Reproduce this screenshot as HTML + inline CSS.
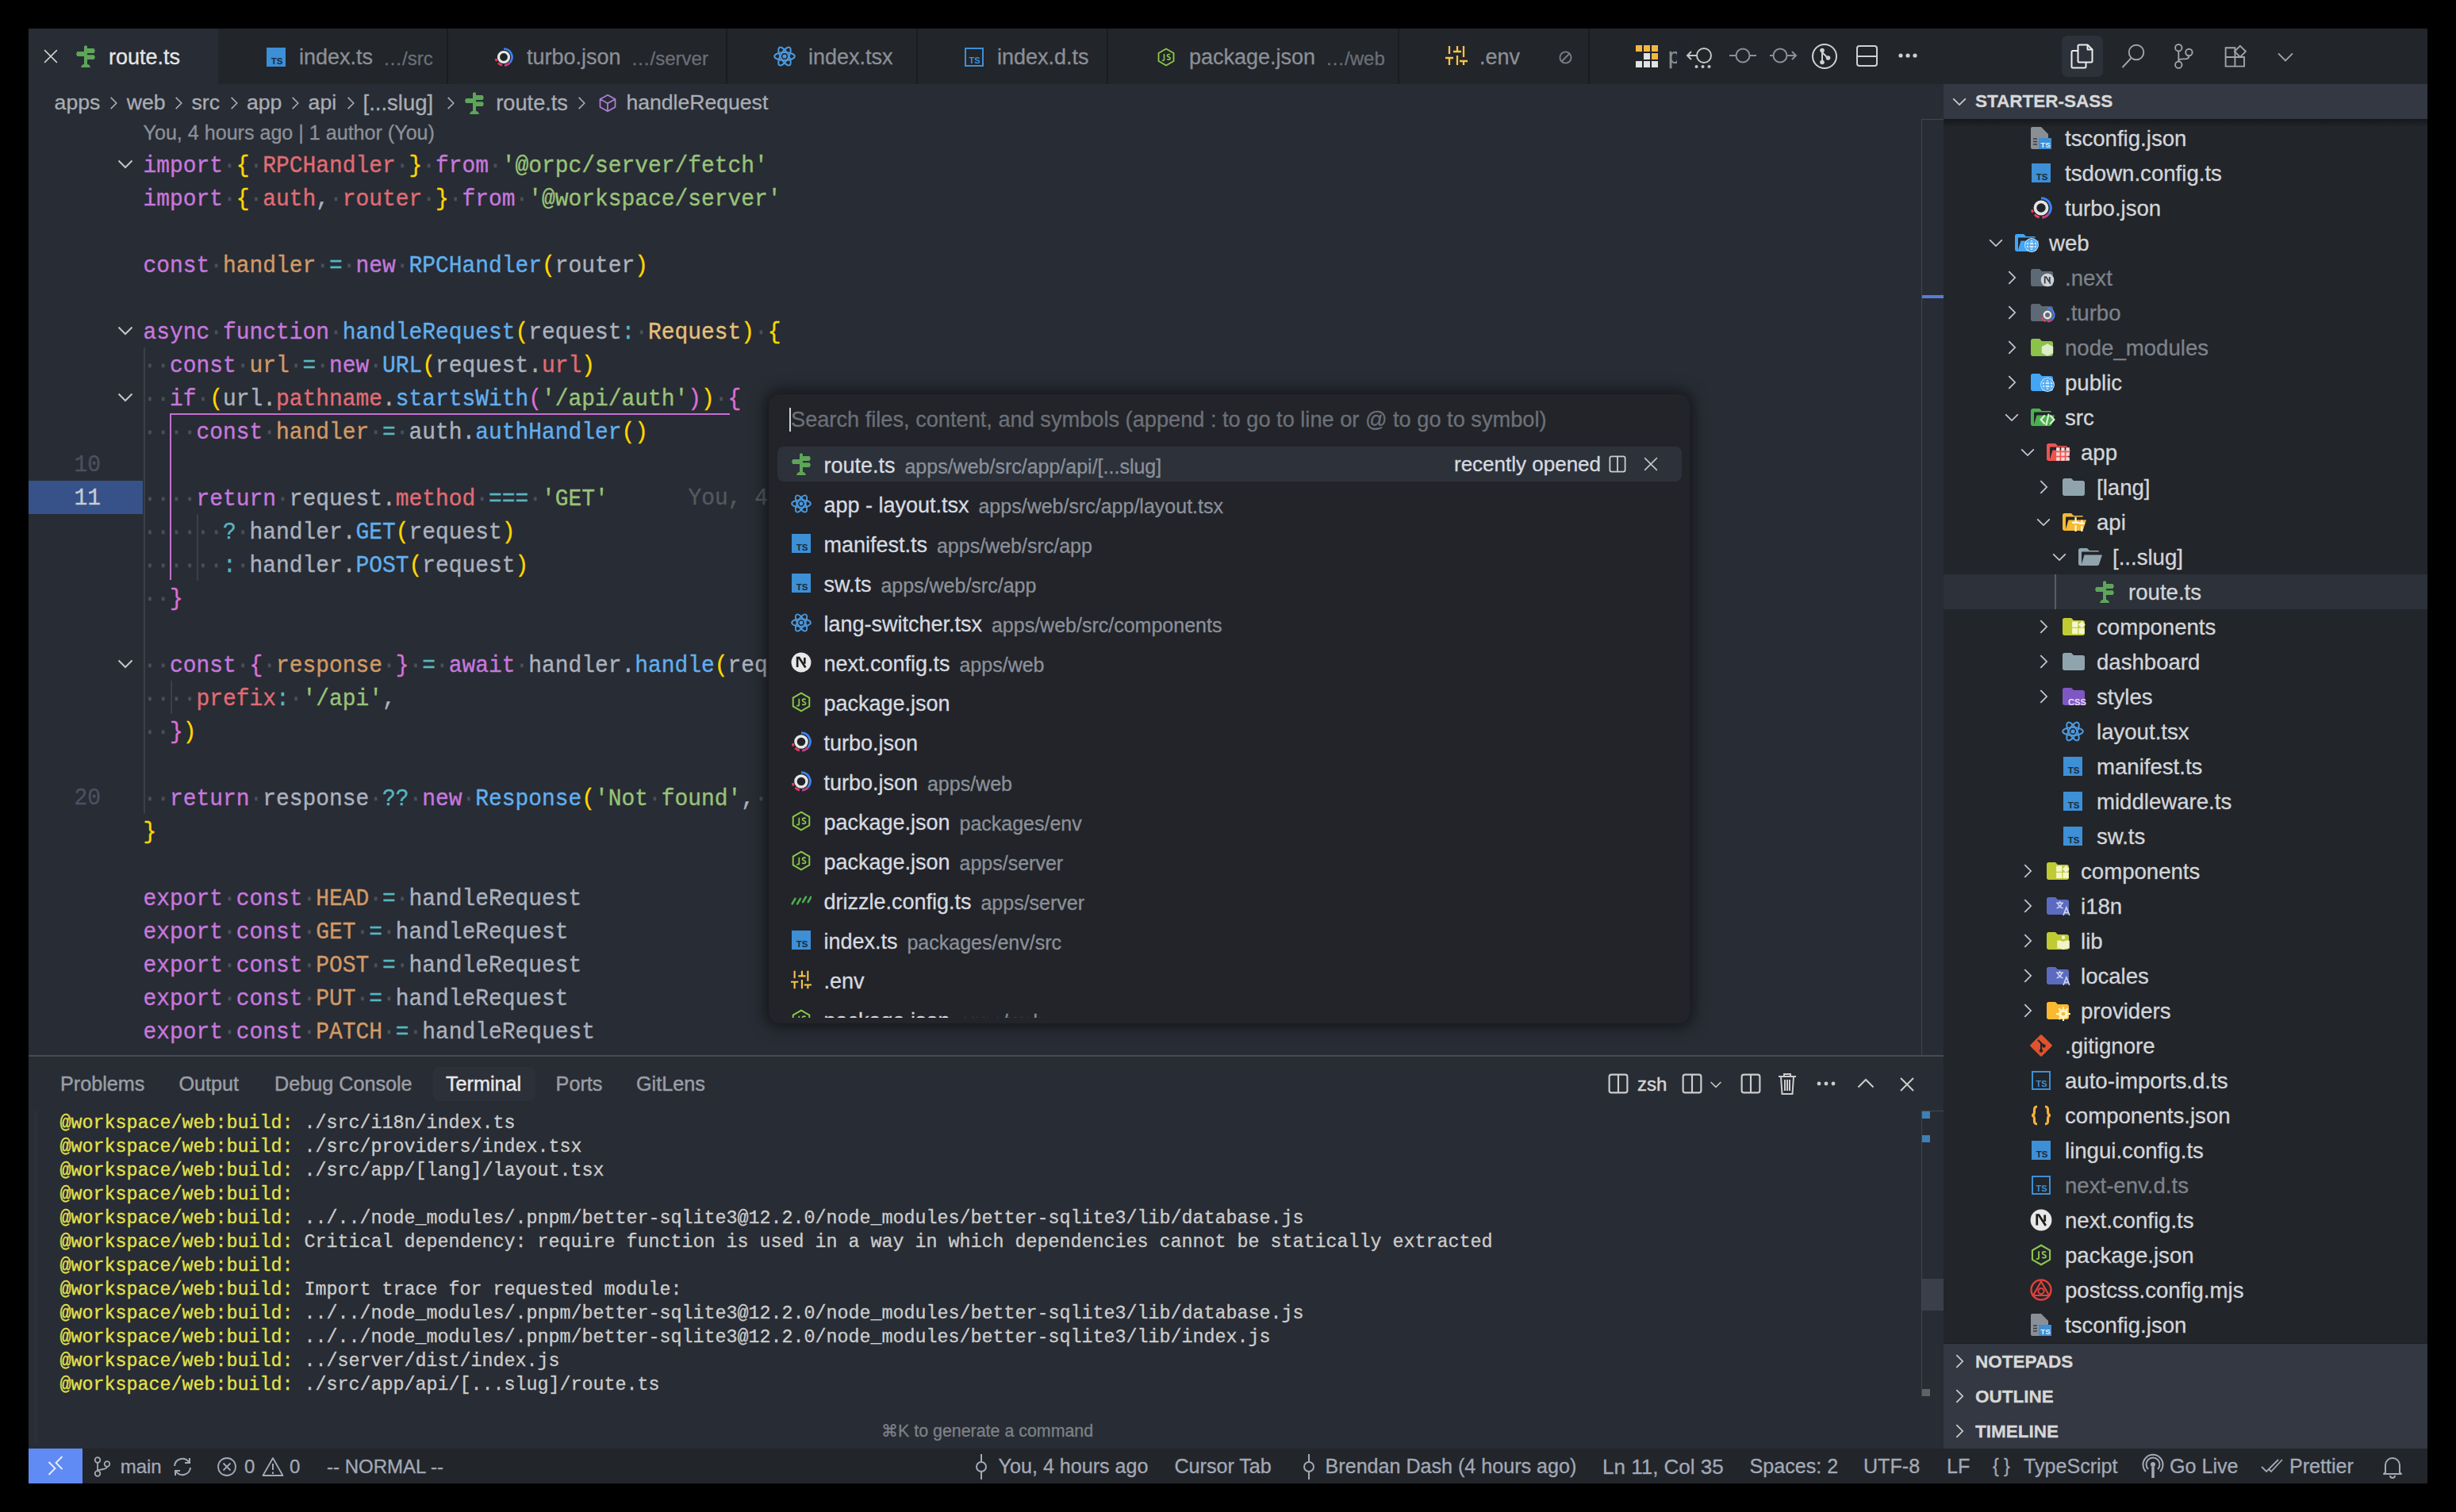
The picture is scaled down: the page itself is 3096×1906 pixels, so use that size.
<!DOCTYPE html><html><head><meta charset="utf-8"><style>
*{margin:0;padding:0;box-sizing:border-box}
html,body{width:3096px;height:1906px;overflow:hidden;background:#000}
body{position:relative;font-family:"Liberation Sans", sans-serif;color:#abb2bf}
.a{position:absolute}
.t{position:absolute;white-space:pre;line-height:1;-webkit-text-stroke:0.3px}
.mono{font-family:"Liberation Mono", monospace}
.code{-webkit-text-stroke:0.35px;transform:scaleY(1.08);transform-origin:0 30px}
.w{color:#4a505c}
.sb{-webkit-text-stroke:0.45px}
svg{position:absolute;overflow:visible}
</style></head><body><div class="a" style="left:36px;top:36px;width:3024px;height:1834px;background:#282c34;"></div><div class="a" style="left:36px;top:36px;width:2414px;height:70px;background:#22252a;"></div><div class="a" style="left:36px;top:36px;width:239px;height:70px;background:#282c34;"></div><div class="a" style="left:2450px;top:36px;width:610px;height:70px;background:#22252a;"></div><div class="a" style="left:2450px;top:106px;width:610px;height:1720px;background:#22252a;"></div><div class="a" style="left:36px;top:1826px;width:3024px;height:44px;background:#22252a;"></div><div class="a" style="left:36px;top:606px;width:144px;height:42px;background:#365289;"></div><div class="t mono code" style="left:93.49000000000001px;top:570.05px;font-size:27.92px;line-height:34.9px;color:#495162;">10</div><div class="t mono code" style="left:93.49000000000001px;top:612.05px;font-size:27.92px;line-height:34.9px;color:#c8ccd4;">11</div><div class="t mono code" style="left:93.49000000000001px;top:990.05px;font-size:27.92px;line-height:34.9px;color:#495162;">20</div><div class="a" style="left:181px;top:438px;width:2px;height:588px;background:#3b4048"></div><div class="a" style="left:248px;top:648px;width:2px;height:84px;background:#3b4048"></div><div class="a" style="left:215px;top:858px;width:2px;height:42px;background:#3b4048"></div><div class="a" style="left:214px;top:521px;width:706px;height:2px;background:#c56fd0"></div><div class="a" style="left:214px;top:521px;width:2px;height:210px;background:#c56fd0"></div><div class="t mono code" style="left:180.5px;top:188.5px;font-size:27.92px;line-height:42px"><span style="color:#c678dd">import</span><span class="w">·</span><span style="color:#ffd700">{</span><span class="w">·</span><span style="color:#e06c75">RPCHandler</span><span class="w">·</span><span style="color:#ffd700">}</span><span class="w">·</span><span style="color:#c678dd">from</span><span class="w">·</span><span style="color:#98c379">&#x27;@orpc/server/fetch&#x27;</span></div><div class="t mono code" style="left:180.5px;top:230.5px;font-size:27.92px;line-height:42px"><span style="color:#c678dd">import</span><span class="w">·</span><span style="color:#ffd700">{</span><span class="w">·</span><span style="color:#e06c75">auth</span><span style="color:#abb2bf">,</span><span class="w">·</span><span style="color:#e06c75">router</span><span class="w">·</span><span style="color:#ffd700">}</span><span class="w">·</span><span style="color:#c678dd">from</span><span class="w">·</span><span style="color:#98c379">&#x27;@workspace/server&#x27;</span></div><div class="t mono code" style="left:180.5px;top:314.5px;font-size:27.92px;line-height:42px"><span style="color:#c678dd">const</span><span class="w">·</span><span style="color:#d19a66">handler</span><span class="w">·</span><span style="color:#56b6c2">=</span><span class="w">·</span><span style="color:#c678dd">new</span><span class="w">·</span><span style="color:#61afef">RPCHandler</span><span style="color:#ffd700">(</span><span style="color:#abb2bf">router</span><span style="color:#ffd700">)</span></div><div class="t mono code" style="left:180.5px;top:398.5px;font-size:27.92px;line-height:42px"><span style="color:#c678dd">async</span><span class="w">·</span><span style="color:#c678dd">function</span><span class="w">·</span><span style="color:#61afef">handleRequest</span><span style="color:#ffd700">(</span><span style="color:#abb2bf">request</span><span style="color:#56b6c2">:</span><span class="w">·</span><span style="color:#e5c07b">Request</span><span style="color:#ffd700">)</span><span class="w">·</span><span style="color:#ffd700">{</span></div><div class="t mono code" style="left:180.5px;top:440.5px;font-size:27.92px;line-height:42px"><span class="w">··</span><span style="color:#c678dd">const</span><span class="w">·</span><span style="color:#d19a66">url</span><span class="w">·</span><span style="color:#56b6c2">=</span><span class="w">·</span><span style="color:#c678dd">new</span><span class="w">·</span><span style="color:#61afef">URL</span><span style="color:#ffd700">(</span><span style="color:#abb2bf">request</span><span style="color:#abb2bf">.</span><span style="color:#e06c75">url</span><span style="color:#ffd700">)</span></div><div class="t mono code" style="left:180.5px;top:482.5px;font-size:27.92px;line-height:42px"><span class="w">··</span><span style="color:#c678dd">if</span><span class="w">·</span><span style="color:#ffd700">(</span><span style="color:#abb2bf">url</span><span style="color:#abb2bf">.</span><span style="color:#e06c75">pathname</span><span style="color:#abb2bf">.</span><span style="color:#61afef">startsWith</span><span style="color:#da70d6">(</span><span style="color:#98c379">&#x27;/api/auth&#x27;</span><span style="color:#da70d6">)</span><span style="color:#ffd700">)</span><span class="w">·</span><span style="color:#da70d6">{</span></div><div class="t mono code" style="left:180.5px;top:524.5px;font-size:27.92px;line-height:42px"><span class="w">····</span><span style="color:#c678dd">const</span><span class="w">·</span><span style="color:#d19a66">handler</span><span class="w">·</span><span style="color:#56b6c2">=</span><span class="w">·</span><span style="color:#abb2bf">auth</span><span style="color:#abb2bf">.</span><span style="color:#61afef">authHandler</span><span style="color:#ffd700">(</span><span style="color:#ffd700">)</span></div><div class="t mono code" style="left:180.5px;top:608.5px;font-size:27.92px;line-height:42px"><span class="w">····</span><span style="color:#c678dd">return</span><span class="w">·</span><span style="color:#abb2bf">request</span><span style="color:#abb2bf">.</span><span style="color:#e06c75">method</span><span class="w">·</span><span style="color:#56b6c2">===</span><span class="w">·</span><span style="color:#98c379">&#x27;GET&#x27;</span></div><div class="t mono code" style="left:180.5px;top:650.5px;font-size:27.92px;line-height:42px"><span class="w">······</span><span style="color:#56b6c2">?</span><span class="w">·</span><span style="color:#abb2bf">handler</span><span style="color:#abb2bf">.</span><span style="color:#61afef">GET</span><span style="color:#ffd700">(</span><span style="color:#abb2bf">request</span><span style="color:#ffd700">)</span></div><div class="t mono code" style="left:180.5px;top:692.5px;font-size:27.92px;line-height:42px"><span class="w">······</span><span style="color:#56b6c2">:</span><span class="w">·</span><span style="color:#abb2bf">handler</span><span style="color:#abb2bf">.</span><span style="color:#61afef">POST</span><span style="color:#ffd700">(</span><span style="color:#abb2bf">request</span><span style="color:#ffd700">)</span></div><div class="t mono code" style="left:180.5px;top:734.5px;font-size:27.92px;line-height:42px"><span class="w">··</span><span style="color:#da70d6">}</span></div><div class="t mono code" style="left:180.5px;top:818.5px;font-size:27.92px;line-height:42px"><span class="w">··</span><span style="color:#c678dd">const</span><span class="w">·</span><span style="color:#da70d6">{</span><span class="w">·</span><span style="color:#d19a66">response</span><span class="w">·</span><span style="color:#da70d6">}</span><span class="w">·</span><span style="color:#56b6c2">=</span><span class="w">·</span><span style="color:#c678dd">await</span><span class="w">·</span><span style="color:#abb2bf">handler</span><span style="color:#abb2bf">.</span><span style="color:#61afef">handle</span><span style="color:#ffd700">(</span><span style="color:#abb2bf">request</span><span style="color:#abb2bf">,</span><span class="w">·</span><span style="color:#da70d6">{</span></div><div class="t mono code" style="left:180.5px;top:860.5px;font-size:27.92px;line-height:42px"><span class="w">····</span><span style="color:#e06c75">prefix</span><span style="color:#56b6c2">:</span><span class="w">·</span><span style="color:#98c379">&#x27;/api&#x27;</span><span style="color:#abb2bf">,</span></div><div class="t mono code" style="left:180.5px;top:902.5px;font-size:27.92px;line-height:42px"><span class="w">··</span><span style="color:#da70d6">}</span><span style="color:#ffd700">)</span></div><div class="t mono code" style="left:180.5px;top:986.5px;font-size:27.92px;line-height:42px"><span class="w">··</span><span style="color:#c678dd">return</span><span class="w">·</span><span style="color:#abb2bf">response</span><span class="w">·</span><span style="color:#56b6c2">??</span><span class="w">·</span><span style="color:#c678dd">new</span><span class="w">·</span><span style="color:#61afef">Response</span><span style="color:#ffd700">(</span><span style="color:#98c379">&#x27;Not<span class="w">·</span>found&#x27;</span><span style="color:#abb2bf">,</span><span class="w">·</span><span style="color:#da70d6">{</span><span class="w">·</span><span style="color:#e06c75">status</span><span style="color:#56b6c2">:</span><span class="w">·</span><span style="color:#d19a66">404</span><span class="w">·</span><span style="color:#da70d6">}</span><span style="color:#ffd700">)</span></div><div class="t mono code" style="left:180.5px;top:1028.5px;font-size:27.92px;line-height:42px"><span style="color:#ffd700">}</span></div><div class="t mono code" style="left:180.5px;top:1112.5px;font-size:27.92px;line-height:42px"><span style="color:#c678dd">export</span><span class="w">·</span><span style="color:#c678dd">const</span><span class="w">·</span><span style="color:#d19a66">HEAD</span><span class="w">·</span><span style="color:#56b6c2">=</span><span class="w">·</span><span style="color:#abb2bf">handleRequest</span></div><div class="t mono code" style="left:180.5px;top:1154.5px;font-size:27.92px;line-height:42px"><span style="color:#c678dd">export</span><span class="w">·</span><span style="color:#c678dd">const</span><span class="w">·</span><span style="color:#d19a66">GET</span><span class="w">·</span><span style="color:#56b6c2">=</span><span class="w">·</span><span style="color:#abb2bf">handleRequest</span></div><div class="t mono code" style="left:180.5px;top:1196.5px;font-size:27.92px;line-height:42px"><span style="color:#c678dd">export</span><span class="w">·</span><span style="color:#c678dd">const</span><span class="w">·</span><span style="color:#d19a66">POST</span><span class="w">·</span><span style="color:#56b6c2">=</span><span class="w">·</span><span style="color:#abb2bf">handleRequest</span></div><div class="t mono code" style="left:180.5px;top:1238.5px;font-size:27.92px;line-height:42px"><span style="color:#c678dd">export</span><span class="w">·</span><span style="color:#c678dd">const</span><span class="w">·</span><span style="color:#d19a66">PUT</span><span class="w">·</span><span style="color:#56b6c2">=</span><span class="w">·</span><span style="color:#abb2bf">handleRequest</span></div><div class="t mono code" style="left:180.5px;top:1280.5px;font-size:27.92px;line-height:42px"><span style="color:#c678dd">export</span><span class="w">·</span><span style="color:#c678dd">const</span><span class="w">·</span><span style="color:#d19a66">PATCH</span><span class="w">·</span><span style="color:#56b6c2">=</span><span class="w">·</span><span style="color:#abb2bf">handleRequest</span></div><div class="t mono code" style="left:867.4549999999999px;top:612.05px;font-size:27.92px;line-height:34.9px;color:#545862;">You, 4 hours ago • Initial commit</div><svg style="left:148px;top:201.0px" width="20" height="12" viewBox="0 0 20 12"><path d="M1.5 1.5 L10 10 L18.5 1.5" fill="none" stroke="#c5c5c5" stroke-width="2"/></svg><svg style="left:148px;top:411.0px" width="20" height="12" viewBox="0 0 20 12"><path d="M1.5 1.5 L10 10 L18.5 1.5" fill="none" stroke="#c5c5c5" stroke-width="2"/></svg><svg style="left:148px;top:495.0px" width="20" height="12" viewBox="0 0 20 12"><path d="M1.5 1.5 L10 10 L18.5 1.5" fill="none" stroke="#c5c5c5" stroke-width="2"/></svg><svg style="left:148px;top:831.0px" width="20" height="12" viewBox="0 0 20 12"><path d="M1.5 1.5 L10 10 L18.5 1.5" fill="none" stroke="#c5c5c5" stroke-width="2"/></svg>
<svg width="0" height="0" style="position:absolute">
<defs>
<symbol id="i-route" viewBox="0 0 24 28">
 <path fill="#5ea55a" d="M10 1.5 12 0 14 1.5V4.1H22.5L23.9 7 22.5 10H14V12.2H22.5L23.9 15.1 22.5 18.1H14V24.1H10V14.1H1.3L0 11.1 1.3 8.1H10Z"/>
 <path fill="#5ea55a" d="M6 28C6.8 25.5 8 24.1 10 24.1H14C16 24.1 17.2 25.5 18 28Z"/>
</symbol>
<symbol id="i-ts" viewBox="0 0 24 24">
 <rect x="0" y="0" width="24" height="24" fill="#3d8fd6"/>
 <text x="20.5" y="21" font-family="Liberation Sans" font-weight="bold" font-size="11.5" fill="#1b2a3a" text-anchor="end">TS</text>
</symbol>
<symbol id="i-tsd" viewBox="0 0 24 24">
 <rect x="1" y="1" width="22" height="22" fill="none" stroke="#3d8fd6" stroke-width="2"/>
 <text x="19.5" y="20" font-family="Liberation Sans" font-weight="bold" font-size="11" fill="#3d8fd6" text-anchor="end">TS</text>
</symbol>
<symbol id="i-turbo" viewBox="0 0 24 24">
 <circle cx="12" cy="12" r="6.5" fill="none" stroke="#e6e6e6" stroke-width="3.2"/>
 <path d="M12 1.5 A10.5 10.5 0 0 1 20 18.8" fill="none" stroke="#3b82f6" stroke-width="2.6"/>
 <path d="M20 18.8 A10.5 10.5 0 0 1 13 22.4" fill="none" stroke="#c0418b" stroke-width="2.6"/>
 <path d="M10 22.3 A10.5 10.5 0 0 1 5 19.3" fill="none" stroke="#ef3b5d" stroke-width="2.6"/>
 <path d="M3.2 17 A10.5 10.5 0 0 1 2 14" fill="none" stroke="#ef3b5d" stroke-width="2.6"/>
</symbol>
<symbol id="i-react" viewBox="0 0 28 26">
 <g fill="none" stroke="#4b9ae0" stroke-width="2">
 <ellipse cx="14" cy="13" rx="12.8" ry="5"/>
 <ellipse cx="14" cy="13" rx="12.8" ry="5" transform="rotate(60 14 13)"/>
 <ellipse cx="14" cy="13" rx="12.8" ry="5" transform="rotate(120 14 13)"/>
 </g><circle cx="14" cy="13" r="3.6" fill="#22252b"/><circle cx="14" cy="13" r="2.6" fill="#4b9ae0"/>
</symbol>
<symbol id="i-node" viewBox="0 0 24 24">
 <path d="M12 1.5 21.5 7v10L12 22.5 2.5 17V7z" fill="none" stroke="#8cc84b" stroke-width="1.8"/>
 <path d="M9.5 8v7.2c0 1.3-1.8 1.5-2.6.6M17 9.2c-.6-1-3.6-1.3-3.6.9 0 2 3.8 1.3 3.8 3.4 0 2.1-3.3 2-4 .8" fill="none" stroke="#8cc84b" stroke-width="1.6"/>
</symbol>
<symbol id="i-env" viewBox="0 0 28 24">
 <g stroke="#f7c34a" stroke-width="2.3" fill="none">
 <path d="M5 0v10M0 15h10M5 15v9M15 0v7M10 7h10M15 12v12M23 0v14M18 19h10M23 19v5"/>
 </g>
</symbol>
<symbol id="i-next" viewBox="0 0 24 24">
 <circle cx="12" cy="12" r="11.5" fill="#e8e8e8"/>
 <path d="M7.5 17.5V6.5h2l7.5 11.5M16 6.5v7" fill="none" stroke="#1e1e1e" stroke-width="2.4"/>
</symbol>
<symbol id="i-drizzle" viewBox="0 0 24 24">
 <g stroke="#4caf50" stroke-width="2.4" stroke-linecap="round"><path d="M1.5 16 5 10M7.5 16 11 10M14 14 17.5 8M20 14 23.5 8"/></g>
</symbol>
<symbol id="i-cube" viewBox="0 0 24 24">
 <path d="M12 1.8 21.5 7v10L12 22.2 2.5 17V7z M2.5 7 12 12.2 21.5 7 M12 12.2v10" fill="none" stroke="#b180d7" stroke-width="1.7" stroke-linejoin="round"/>
</symbol>
<symbol id="i-chev-r" viewBox="0 0 24 24"><path d="M8 3.5 16.5 12 8 20.5" fill="none" stroke="currentColor" stroke-width="1.9"/></symbol>
<symbol id="i-chev-d" viewBox="0 0 24 24"><path d="M3.5 8 12 16.5 20.5 8" fill="none" stroke="currentColor" stroke-width="1.9"/></symbol>
<symbol id="i-close" viewBox="0 0 24 24"><path d="M1.5 1.5 22.5 22.5M22.5 1.5 1.5 22.5" fill="none" stroke="currentColor" stroke-width="1.9"/></symbol>
<symbol id="i-split" viewBox="0 0 24 24"><rect x="1.5" y="1.5" width="21" height="21" rx="2.5" fill="none" stroke="currentColor" stroke-width="2"/><path d="M12 1.5v21" stroke="currentColor" stroke-width="2"/></symbol>
</defs></svg>
<div class="a" style="left:563px;top:36px;width:2px;height:70px;background:#1a1c20;"></div><div class="a" style="left:915px;top:36px;width:2px;height:70px;background:#1a1c20;"></div><div class="a" style="left:1155px;top:36px;width:2px;height:70px;background:#1a1c20;"></div><div class="a" style="left:1395px;top:36px;width:2px;height:70px;background:#1a1c20;"></div><div class="a" style="left:1762px;top:36px;width:2px;height:70px;background:#1a1c20;"></div><div class="a" style="left:2002px;top:36px;width:2px;height:70px;background:#1a1c20;"></div><svg style="left:55px;top:62px;color:#d4d4d4" width="18" height="18"><use href="#i-close"/></svg><svg style="left:96px;top:57px" width="24" height="28"><use href="#i-route"/></svg><div class="t" style="left:137px;top:55.62px;font-size:27px;line-height:33.75px;color:#e6e6e6;">route.ts</div><svg style="left:336px;top:60px" width="24" height="24"><use href="#i-ts"/></svg><div class="t" style="left:377px;top:55.62px;font-size:27px;line-height:33.75px;color:#8b8f97;">index.ts</div><div class="t" style="left:483.046875px;top:58.50px;font-size:24px;line-height:30.0px;color:#6b6f77;">…/src</div><svg style="left:623px;top:60px" width="24" height="24"><use href="#i-turbo"/></svg><div class="t" style="left:664px;top:55.62px;font-size:27px;line-height:33.75px;color:#8b8f97;">turbo.json</div><div class="t" style="left:795.5625px;top:58.50px;font-size:24px;line-height:30.0px;color:#6b6f77;">…/server</div><svg style="left:975px;top:58px" width="28" height="26"><use href="#i-react"/></svg><div class="t" style="left:1019px;top:55.62px;font-size:27px;line-height:33.75px;color:#8b8f97;">index.tsx</div><svg style="left:1216px;top:60px" width="24" height="24"><use href="#i-tsd"/></svg><div class="t" style="left:1257px;top:55.62px;font-size:27px;line-height:33.75px;color:#8b8f97;">index.d.ts</div><svg style="left:1458px;top:60px" width="24" height="24"><use href="#i-node"/></svg><div class="t" style="left:1499px;top:55.62px;font-size:27px;line-height:33.75px;color:#8b8f97;">package.json</div><div class="t" style="left:1671.109375px;top:58.50px;font-size:24px;line-height:30.0px;color:#6b6f77;">…/web</div><svg style="left:1822px;top:58px" width="28" height="24"><use href="#i-env"/></svg><div class="t" style="left:1865px;top:55.62px;font-size:27px;line-height:33.75px;color:#8b8f97;">.env</div><div class="t" style="left:68.6px;top:113.38px;font-size:26.6px;line-height:33.25px;color:#a9adb4;">apps</div><div class="t" style="left:159.8px;top:113.38px;font-size:26.6px;line-height:33.25px;color:#a9adb4;">web</div><div class="t" style="left:241.5px;top:113.38px;font-size:26.6px;line-height:33.25px;color:#a9adb4;">src</div><div class="t" style="left:311px;top:113.38px;font-size:26.6px;line-height:33.25px;color:#a9adb4;">app</div><div class="t" style="left:388.6px;top:113.38px;font-size:26.6px;line-height:33.25px;color:#a9adb4;">api</div><div class="t" style="left:457.5px;top:112.81px;font-size:27.5px;line-height:34.38px;color:#a9adb4;">[...slug]</div><svg style="left:133.3px;top:120px;color:#a9adb4" width="20" height="20"><use href="#i-chev-r"/></svg><svg style="left:215px;top:120px;color:#a9adb4" width="20" height="20"><use href="#i-chev-r"/></svg><svg style="left:284.5px;top:120px;color:#a9adb4" width="20" height="20"><use href="#i-chev-r"/></svg><svg style="left:362.4px;top:120px;color:#a9adb4" width="20" height="20"><use href="#i-chev-r"/></svg><svg style="left:431.5px;top:120px;color:#a9adb4" width="20" height="20"><use href="#i-chev-r"/></svg><svg style="left:557.5px;top:120px;color:#a9adb4" width="20" height="20"><use href="#i-chev-r"/></svg><svg style="left:723px;top:120px;color:#a9adb4" width="20" height="20"><use href="#i-chev-r"/></svg><svg style="left:586px;top:116px" width="24" height="28"><use href="#i-route"/></svg><div class="t" style="left:625.3px;top:113.00px;font-size:27.2px;line-height:34.0px;color:#a9adb4;">route.ts</div><svg style="left:754px;top:118px" width="24" height="24"><use href="#i-cube"/></svg><div class="t" style="left:789.4px;top:113.38px;font-size:26.6px;line-height:33.25px;color:#a9adb4;">handleRequest</div><div class="t" style="left:180.5px;top:152.31px;font-size:25.1px;line-height:31.38px;color:#8d9199;">You, 4 hours ago | 1 author (You)</div><div class="a" style="left:2422px;top:150px;width:1px;height:1180px;background:#43464d;"></div><div class="a" style="left:2422px;top:150px;width:28px;height:1px;background:#43464d;"></div><div class="a" style="left:2423px;top:372px;width:27px;height:4px;background:#5a7bd6;"></div><div class="a" style="left:2450px;top:106px;width:610px;height:44px;background:#333842;"></div><svg style="left:2459px;top:117px;color:#cccccc" width="22" height="22"><use href="#i-chev-d"/></svg><div class="t" style="left:2490px;top:114.44px;font-size:22.5px;line-height:28.12px;color:#d7d7d7;font-weight:bold">STARTER-SASS</div><div class="a" style="left:2450px;top:150px;width:610px;height:10px;background:linear-gradient(#15171b,rgba(21,23,27,0))"></div>
<svg width="0" height="0" style="position:absolute"><defs>
<symbol id="f-c" viewBox="0 0 28 22"><path d="M11 0H2.5C1.1 0 0 1.1 0 2.5v17C0 20.9 1.1 22 2.5 22h23c1.4 0 2.5-1.1 2.5-2.5v-14C28 4.1 26.9 3 25.5 3H14z" fill="currentColor"/></symbol>
<symbol id="f-o" viewBox="0 0 30 22"><path d="M11 0H2.5C1.1 0 0 1.1 0 2.5v17C0 20.9 1.1 22 2.5 22h21.5c1 0 1.7-.6 2-1.4L30 8.5H7.5L4 20V5.5C4 5 4.3 4.5 5 4.5h21V4.5C26 3.7 25.3 3 24.5 3H14z" fill="currentColor"/></symbol>
<symbol id="i-tscfg" viewBox="0 0 26 28"><path d="M0 2C0 .9.9 0 2 0h11l9 9v6H10v13H2c-1.1 0-2-.9-2-2z" fill="#8a8f96"/><path d="M3 15h5M3 18.5h5M3 22h5" stroke="#3a3d42" stroke-width="1.6"/><rect x="10" y="14" width="16" height="14" fill="#3d8fd6"/><text x="24.5" y="26" font-family="Liberation Sans" font-weight="bold" font-size="9.5" fill="#f0f0f0" text-anchor="end">TS</text></symbol>
<symbol id="i-git" viewBox="0 0 28 28"><path d="M14 1.5 26.5 14 14 26.5 1.5 14z" fill="#e0532d" stroke="#e0532d" stroke-width="2.5" stroke-linejoin="round"/><path d="M10 7l7.5 7.5M14 11v9" stroke="#22252b" stroke-width="2"/><circle cx="14" cy="20.5" r="2.2" fill="#22252b"/><circle cx="17.5" cy="14.5" r="2.2" fill="#22252b"/></symbol>
<symbol id="i-braces" viewBox="0 0 28 28"><path d="M9 3C5 3 5.5 6 5.5 9s-.5 5-3.5 5c3 0 3.5 2 3.5 5s-.5 6 3.5 6M19 3c4 0 3.5 3 3.5 6s.5 5 3.5 5c-3 0-3.5 2-3.5 5s.5 6-3.5 6" fill="none" stroke="#f5b13d" stroke-width="3.2"/></symbol>
<symbol id="i-postcss" viewBox="0 0 28 28"><circle cx="14" cy="14" r="12.5" fill="none" stroke="#e0403a" stroke-width="2.4"/><path d="M14 3.5 24 21H4z" fill="none" stroke="#e0403a" stroke-width="2.2"/><circle cx="14" cy="15.5" r="3.6" fill="none" stroke="#e0403a" stroke-width="2"/></symbol>
</defs></svg>
<svg style="left:2559px;top:160.0px" width="28" height="28"><use href="#i-tscfg"/></svg><div class="t" style="left:2603px;top:157.75px;font-size:27.6px;line-height:34.5px;color:#d3d5d9;">tsconfig.json</div><svg style="left:2561px;top:206.0px" width="24" height="24"><use href="#i-ts"/></svg><div class="t" style="left:2603px;top:201.75px;font-size:27.6px;line-height:34.5px;color:#d3d5d9;">tsdown.config.ts</div><svg style="left:2559px;top:248.0px" width="28" height="28"><use href="#i-turbo"/></svg><div class="t" style="left:2603px;top:245.75px;font-size:27.6px;line-height:34.5px;color:#d3d5d9;">turbo.json</div><svg style="left:2505px;top:295.0px;color:#c5c8ce" width="22" height="22"><use href="#i-chev-d"/></svg><svg style="left:2540px;top:295.0px;color:#42a5f5" width="30" height="22"><use href="#f-o"/></svg><svg style="left:2551px;top:299.0px" width="20" height="20" viewBox="0 0 18 18"><circle cx="9" cy="9" r="8" fill="#d6e9fb" /><g fill="none" stroke="#42a5f5" stroke-width="1.3"><circle cx="9" cy="9" r="6.5"/><ellipse cx="9" cy="9" rx="3" ry="6.5"/><path d="M2.5 9h13M3.5 5.5h11M3.5 12.5h11"/></g></svg><div class="t" style="left:2583px;top:289.75px;font-size:27.6px;line-height:34.5px;color:#d3d5d9;">web</div><svg style="left:2525px;top:339.0px;color:#c5c8ce" width="22" height="22"><use href="#i-chev-r"/></svg><svg style="left:2560px;top:339.0px;color:#5d6a75" width="28" height="22"><use href="#f-c"/></svg><svg style="left:2571px;top:343.0px" width="20" height="20" viewBox="0 0 18 18"><circle cx="9" cy="9" r="7.5" fill="#cfd3d8"/><path d="M6 13V5.5h1.3L12.5 13M11.5 5.5v5" stroke="#3a3f47" stroke-width="1.6" fill="none"/></svg><div class="t" style="left:2603px;top:333.75px;font-size:27.6px;line-height:34.5px;color:#7d828a;">.next</div><svg style="left:2525px;top:383.0px;color:#c5c8ce" width="22" height="22"><use href="#i-chev-r"/></svg><svg style="left:2560px;top:383.0px;color:#5d6a75" width="28" height="22"><use href="#f-c"/></svg><svg style="left:2571px;top:387.0px" width="20" height="20" viewBox="0 0 18 18"><circle cx="9" cy="9" r="3.8" fill="none" stroke="#e6e6e6" stroke-width="2.2"/><path d="M9 1.5a7.5 7.5 0 0 1 5.8 12.3" fill="none" stroke="#4a7cf0" stroke-width="2"/><path d="M14.8 13.8A7.5 7.5 0 0 1 9 16.5" fill="none" stroke="#c0418b" stroke-width="2"/><path d="M7 16.3A7.5 7.5 0 0 1 2.5 12" fill="none" stroke="#ef3b5d" stroke-width="2"/></svg><div class="t" style="left:2603px;top:377.75px;font-size:27.6px;line-height:34.5px;color:#7d828a;">.turbo</div><svg style="left:2525px;top:427.0px;color:#c5c8ce" width="22" height="22"><use href="#i-chev-r"/></svg><svg style="left:2560px;top:427.0px;color:#8bc34a" width="28" height="22"><use href="#f-c"/></svg><svg style="left:2571px;top:431.0px" width="20" height="20" viewBox="0 0 18 18"><path d="M9 2 15.5 5.5v7L9 16l-6.5-3.5v-7z" fill="#dcedc8"/></svg><div class="t" style="left:2603px;top:421.75px;font-size:27.6px;line-height:34.5px;color:#7d828a;">node_modules</div><svg style="left:2525px;top:471.0px;color:#c5c8ce" width="22" height="22"><use href="#i-chev-r"/></svg><svg style="left:2560px;top:471.0px;color:#42a5f5" width="28" height="22"><use href="#f-c"/></svg><svg style="left:2571px;top:475.0px" width="20" height="20" viewBox="0 0 18 18"><circle cx="9" cy="9" r="8" fill="#d6e9fb" /><g fill="none" stroke="#42a5f5" stroke-width="1.3"><circle cx="9" cy="9" r="6.5"/><ellipse cx="9" cy="9" rx="3" ry="6.5"/><path d="M2.5 9h13M3.5 5.5h11M3.5 12.5h11"/></g></svg><div class="t" style="left:2603px;top:465.75px;font-size:27.6px;line-height:34.5px;color:#d3d5d9;">public</div><svg style="left:2525px;top:515.0px;color:#c5c8ce" width="22" height="22"><use href="#i-chev-d"/></svg><svg style="left:2560px;top:515.0px;color:#4caf50" width="30" height="22"><use href="#f-o"/></svg><svg style="left:2571px;top:519.0px" width="20" height="20" viewBox="0 0 18 18"><path d="M6 4 1.5 9 6 14M12 4l4.5 5-4.5 5M10.5 2.5l-3 13" fill="none" stroke="#d9f2d0" stroke-width="2"/></svg><div class="t" style="left:2603px;top:509.75px;font-size:27.6px;line-height:34.5px;color:#d3d5d9;">src</div><svg style="left:2545px;top:559.0px;color:#c5c8ce" width="22" height="22"><use href="#i-chev-d"/></svg><svg style="left:2580px;top:559.0px;color:#ef5350" width="30" height="22"><use href="#f-o"/></svg><svg style="left:2591px;top:563.0px" width="20" height="20" viewBox="0 0 18 18"><g fill="#f8d7d7"><rect x="1.0" y="1.0" width="4" height="4"/><rect x="1.0" y="6.5" width="4" height="4"/><rect x="1.0" y="12.0" width="4" height="4"/><rect x="6.5" y="1.0" width="4" height="4"/><rect x="6.5" y="6.5" width="4" height="4"/><rect x="6.5" y="12.0" width="4" height="4"/><rect x="12.0" y="1.0" width="4" height="4"/><rect x="12.0" y="6.5" width="4" height="4"/><rect x="12.0" y="12.0" width="4" height="4"/></g></svg><div class="t" style="left:2623px;top:553.75px;font-size:27.6px;line-height:34.5px;color:#d3d5d9;">app</div><svg style="left:2565px;top:603.0px;color:#c5c8ce" width="22" height="22"><use href="#i-chev-r"/></svg><svg style="left:2600px;top:603.0px;color:#90a4ae" width="28" height="22"><use href="#f-c"/></svg><div class="t" style="left:2643px;top:597.75px;font-size:27.6px;line-height:34.5px;color:#d3d5d9;">[lang]</div><svg style="left:2565px;top:647.0px;color:#c5c8ce" width="22" height="22"><use href="#i-chev-d"/></svg><svg style="left:2600px;top:647.0px;color:#f9b931" width="30" height="22"><use href="#f-o"/></svg><svg style="left:2611px;top:651.0px" width="20" height="20" viewBox="0 0 18 18"><path d="M5 1v6M1 7h8M5 10v7M12 4v4M9 8h6M12 11v6" stroke="#fff8e0" stroke-width="2" fill="none"/></svg><div class="t" style="left:2643px;top:641.75px;font-size:27.6px;line-height:34.5px;color:#d3d5d9;">api</div><svg style="left:2585px;top:691.0px;color:#c5c8ce" width="22" height="22"><use href="#i-chev-d"/></svg><svg style="left:2620px;top:691.0px;color:#90a4ae" width="30" height="22"><use href="#f-o"/></svg><div class="t" style="left:2663px;top:685.75px;font-size:27.6px;line-height:34.5px;color:#d3d5d9;">[...slug]</div><div class="a" style="left:2450px;top:724px;width:610px;height:44px;background:#2c313a;"></div><div class="a" style="left:2590px;top:724px;width:2px;height:44px;background:#585d66;"></div><svg style="left:2641px;top:732.0px" width="24" height="28.0"><use href="#i-route"/></svg><div class="t" style="left:2683px;top:729.75px;font-size:27.6px;line-height:34.5px;color:#d3d5d9;">route.ts</div><svg style="left:2565px;top:779.0px;color:#c5c8ce" width="22" height="22"><use href="#i-chev-r"/></svg><svg style="left:2600px;top:779.0px;color:#c0ca33" width="28" height="22"><use href="#f-c"/></svg><svg style="left:2611px;top:783.0px" width="20" height="20" viewBox="0 0 18 18"><g fill="#f3f6cf"><rect x="1" y="8" width="6.5" height="6.5"/><rect x="8.5" y="8" width="6.5" height="6.5"/><rect x="1" y="0.5" width="6.5" height="6.5"/><path d="M12 0 16 4 12 8 8 4z"/></g></svg><div class="t" style="left:2643px;top:773.75px;font-size:27.6px;line-height:34.5px;color:#d3d5d9;">components</div><svg style="left:2565px;top:823.0px;color:#c5c8ce" width="22" height="22"><use href="#i-chev-r"/></svg><svg style="left:2600px;top:823.0px;color:#90a4ae" width="28" height="22"><use href="#f-c"/></svg><div class="t" style="left:2643px;top:817.75px;font-size:27.6px;line-height:34.5px;color:#d3d5d9;">dashboard</div><svg style="left:2565px;top:867.0px;color:#c5c8ce" width="22" height="22"><use href="#i-chev-r"/></svg><svg style="left:2600px;top:867.0px;color:#7e57c2" width="28" height="22"><use href="#f-c"/></svg><svg style="left:2611px;top:871.0px" width="20" height="20" viewBox="0 0 18 18"><text x="17" y="16" font-family="Liberation Sans" font-weight="bold" font-size="10" fill="#e6dcf5" text-anchor="end">CSS</text></svg><div class="t" style="left:2643px;top:861.75px;font-size:27.6px;line-height:34.5px;color:#d3d5d9;">styles</div><svg style="left:2599px;top:908.0px" width="28" height="28"><use href="#i-react"/></svg><div class="t" style="left:2643px;top:905.75px;font-size:27.6px;line-height:34.5px;color:#d3d5d9;">layout.tsx</div><svg style="left:2601px;top:954.0px" width="24" height="24"><use href="#i-ts"/></svg><div class="t" style="left:2643px;top:949.75px;font-size:27.6px;line-height:34.5px;color:#d3d5d9;">manifest.ts</div><svg style="left:2601px;top:998.0px" width="24" height="24"><use href="#i-ts"/></svg><div class="t" style="left:2643px;top:993.75px;font-size:27.6px;line-height:34.5px;color:#d3d5d9;">middleware.ts</div><svg style="left:2601px;top:1042.0px" width="24" height="24"><use href="#i-ts"/></svg><div class="t" style="left:2643px;top:1037.75px;font-size:27.6px;line-height:34.5px;color:#d3d5d9;">sw.ts</div><svg style="left:2545px;top:1087.0px;color:#c5c8ce" width="22" height="22"><use href="#i-chev-r"/></svg><svg style="left:2580px;top:1087.0px;color:#c0ca33" width="28" height="22"><use href="#f-c"/></svg><svg style="left:2591px;top:1091.0px" width="20" height="20" viewBox="0 0 18 18"><g fill="#f3f6cf"><rect x="1" y="8" width="6.5" height="6.5"/><rect x="8.5" y="8" width="6.5" height="6.5"/><rect x="1" y="0.5" width="6.5" height="6.5"/><path d="M12 0 16 4 12 8 8 4z"/></g></svg><div class="t" style="left:2623px;top:1081.75px;font-size:27.6px;line-height:34.5px;color:#d3d5d9;">components</div><svg style="left:2545px;top:1131.0px;color:#c5c8ce" width="22" height="22"><use href="#i-chev-r"/></svg><svg style="left:2580px;top:1131.0px;color:#5c6bc0" width="28" height="22"><use href="#f-c"/></svg><svg style="left:2591px;top:1135.0px" width="20" height="20" viewBox="0 0 18 18"><g fill="none" stroke="#d0d5f5" stroke-width="1.4"><path d="M1 3h8M5 1v2M2.5 3c1 3 3 5 6 6M7.5 3c-1 3-3 5-6 6M9 17l3.5-9 3.5 9M10.2 14h4.6"/></g></svg><div class="t" style="left:2623px;top:1125.75px;font-size:27.6px;line-height:34.5px;color:#d3d5d9;">i18n</div><svg style="left:2545px;top:1175.0px;color:#c5c8ce" width="22" height="22"><use href="#i-chev-r"/></svg><svg style="left:2580px;top:1175.0px;color:#c0ca33" width="28" height="22"><use href="#f-c"/></svg><svg style="left:2591px;top:1179.0px" width="20" height="20" viewBox="0 0 18 18"><path d="M2 6c2.5-.5 5 0 7 1.5 2-1.5 4.5-2 7-1.5v9c-2.5-.5-5 0-7 1.5-2-1.5-4.5-2-7-1.5z" fill="#f0f4c8"/><circle cx="9" cy="2.5" r="2" fill="#f0f4c8"/></svg><div class="t" style="left:2623px;top:1169.75px;font-size:27.6px;line-height:34.5px;color:#d3d5d9;">lib</div><svg style="left:2545px;top:1219.0px;color:#c5c8ce" width="22" height="22"><use href="#i-chev-r"/></svg><svg style="left:2580px;top:1219.0px;color:#5c6bc0" width="28" height="22"><use href="#f-c"/></svg><svg style="left:2591px;top:1223.0px" width="20" height="20" viewBox="0 0 18 18"><g fill="none" stroke="#d0d5f5" stroke-width="1.4"><path d="M1 3h8M5 1v2M2.5 3c1 3 3 5 6 6M7.5 3c-1 3-3 5-6 6M9 17l3.5-9 3.5 9M10.2 14h4.6"/></g></svg><div class="t" style="left:2623px;top:1213.75px;font-size:27.6px;line-height:34.5px;color:#d3d5d9;">locales</div><svg style="left:2545px;top:1263.0px;color:#c5c8ce" width="22" height="22"><use href="#i-chev-r"/></svg><svg style="left:2580px;top:1263.0px;color:#f9b931" width="28" height="22"><use href="#f-c"/></svg><svg style="left:2591px;top:1267.0px" width="20" height="20" viewBox="0 0 18 18"><g fill="#fff3c4"><circle cx="9" cy="10" r="5.5"/><path d="M8 2h2v3H8zM8 15h2v3H8zM1 9h3v2H1zM14 9h3v2h-3zM3.2 4.6l1.4-1.4 2.1 2.1-1.4 1.4zM11.3 12.7l1.4-1.4 2.1 2.1-1.4 1.4zM3.2 15.4l2.1-2.1 1.4 1.4-2.1 2.1zM11.3 5.3l2.1-2.1 1.4 1.4-2.1 2.1z"/></g><circle cx="9" cy="10" r="2.2" fill="#f9b931"/></svg><div class="t" style="left:2623px;top:1257.75px;font-size:27.6px;line-height:34.5px;color:#d3d5d9;">providers</div><svg style="left:2559px;top:1304.0px" width="28" height="28"><use href="#i-git"/></svg><div class="t" style="left:2603px;top:1301.75px;font-size:27.6px;line-height:34.5px;color:#d3d5d9;">.gitignore</div><svg style="left:2561px;top:1350.0px" width="24" height="24"><use href="#i-tsd"/></svg><div class="t" style="left:2603px;top:1345.75px;font-size:27.6px;line-height:34.5px;color:#d3d5d9;">auto-imports.d.ts</div><svg style="left:2559px;top:1392.0px" width="28" height="28"><use href="#i-braces"/></svg><div class="t" style="left:2603px;top:1389.75px;font-size:27.6px;line-height:34.5px;color:#d3d5d9;">components.json</div><svg style="left:2561px;top:1438.0px" width="24" height="24"><use href="#i-ts"/></svg><div class="t" style="left:2603px;top:1433.75px;font-size:27.6px;line-height:34.5px;color:#d3d5d9;">lingui.config.ts</div><svg style="left:2561px;top:1482.0px" width="24" height="24"><use href="#i-tsd"/></svg><div class="t" style="left:2603px;top:1477.75px;font-size:27.6px;line-height:34.5px;color:#7d828a;">next-env.d.ts</div><svg style="left:2559px;top:1524.0px" width="28" height="28"><use href="#i-next"/></svg><div class="t" style="left:2603px;top:1521.75px;font-size:27.6px;line-height:34.5px;color:#d3d5d9;">next.config.ts</div><svg style="left:2559px;top:1568.0px" width="28" height="28"><use href="#i-node"/></svg><div class="t" style="left:2603px;top:1565.75px;font-size:27.6px;line-height:34.5px;color:#d3d5d9;">package.json</div><svg style="left:2559px;top:1612.0px" width="28" height="28"><use href="#i-postcss"/></svg><div class="t" style="left:2603px;top:1609.75px;font-size:27.6px;line-height:34.5px;color:#d3d5d9;">postcss.config.mjs</div><svg style="left:2559px;top:1656.0px" width="28" height="28"><use href="#i-tscfg"/></svg><div class="t" style="left:2603px;top:1653.75px;font-size:27.6px;line-height:34.5px;color:#d3d5d9;">tsconfig.json</div><div class="a" style="left:2450px;top:1694px;width:610px;height:44px;background:#333842;"></div><svg style="left:2459px;top:1705px;color:#cccccc" width="22" height="22"><use href="#i-chev-r"/></svg><div class="t" style="left:2490px;top:1702.94px;font-size:22.5px;line-height:28.12px;color:#d7d7d7;font-weight:bold">NOTEPADS</div><div class="a" style="left:2450px;top:1738px;width:610px;height:44px;background:#333842;"></div><svg style="left:2459px;top:1749px;color:#cccccc" width="22" height="22"><use href="#i-chev-r"/></svg><div class="t" style="left:2490px;top:1746.94px;font-size:22.5px;line-height:28.12px;color:#d7d7d7;font-weight:bold">OUTLINE</div><div class="a" style="left:2450px;top:1782px;width:610px;height:44px;background:#333842;"></div><svg style="left:2459px;top:1793px;color:#cccccc" width="22" height="22"><use href="#i-chev-r"/></svg><div class="t" style="left:2490px;top:1790.94px;font-size:22.5px;line-height:28.12px;color:#d7d7d7;font-weight:bold">TIMELINE</div><div class="a" style="left:2450px;top:1693px;width:610px;height:1px;background:#1b1d22;"></div><div class="a" style="left:36px;top:1330px;width:2414px;height:2px;background:#4a4b50;"></div><div class="t sb" style="left:76px;top:1351.25px;font-size:25.2px;line-height:31.5px;color:#9a9ea6;">Problems</div><div class="t sb" style="left:225.4px;top:1351.25px;font-size:25.2px;line-height:31.5px;color:#9a9ea6;">Output</div><div class="t sb" style="left:346px;top:1351.25px;font-size:25.2px;line-height:31.5px;color:#9a9ea6;">Debug Console</div><div class="a" style="left:546px;top:1345px;width:129px;height:43px;background:#2c3038;border-radius:7px"></div><div class="t sb" style="left:562px;top:1351.25px;font-size:25.2px;line-height:31.5px;color:#e8e8e8;">Terminal</div><div class="t sb" style="left:700.6px;top:1351.25px;font-size:25.2px;line-height:31.5px;color:#9a9ea6;">Ports</div><div class="t sb" style="left:802px;top:1351.25px;font-size:25.2px;line-height:31.5px;color:#9a9ea6;">GitLens</div><svg style="left:2027px;top:1353px;color:#cccccc" width="26" height="26"><use href="#i-split"/></svg><div class="t sb" style="left:2064px;top:1352.00px;font-size:24px;line-height:30.0px;color:#d4d4d4;">zsh</div><svg style="left:2120px;top:1353px;color:#cccccc" width="26" height="26"><use href="#i-split"/></svg><svg style="left:2154px;top:1358px;color:#cccccc" width="18" height="18"><use href="#i-chev-d"/></svg><svg style="left:2194px;top:1353px;color:#cccccc" width="26" height="26"><use href="#i-split"/></svg><div class="t mono" style="left:75.6px;top:1401.0px;font-size:23.330px;line-height:30px"><span style="color:#e3e24c">@workspace/web:build:</span><span style="color:#cccccc"> ./src/i18n/index.ts</span></div><div class="t mono" style="left:75.6px;top:1431.0px;font-size:23.330px;line-height:30px"><span style="color:#e3e24c">@workspace/web:build:</span><span style="color:#cccccc"> ./src/providers/index.tsx</span></div><div class="t mono" style="left:75.6px;top:1461.0px;font-size:23.330px;line-height:30px"><span style="color:#e3e24c">@workspace/web:build:</span><span style="color:#cccccc"> ./src/app/[lang]/layout.tsx</span></div><div class="t mono" style="left:75.6px;top:1491.0px;font-size:23.330px;line-height:30px"><span style="color:#e3e24c">@workspace/web:build:</span><span style="color:#cccccc"> </span></div><div class="t mono" style="left:75.6px;top:1521.0px;font-size:23.330px;line-height:30px"><span style="color:#e3e24c">@workspace/web:build:</span><span style="color:#cccccc"> ../../node_modules/.pnpm/better-sqlite3@12.2.0/node_modules/better-sqlite3/lib/database.js</span></div><div class="t mono" style="left:75.6px;top:1551.0px;font-size:23.330px;line-height:30px"><span style="color:#e3e24c">@workspace/web:build:</span><span style="color:#cccccc"> Critical dependency: require function is used in a way in which dependencies cannot be statically extracted</span></div><div class="t mono" style="left:75.6px;top:1581.0px;font-size:23.330px;line-height:30px"><span style="color:#e3e24c">@workspace/web:build:</span><span style="color:#cccccc"> </span></div><div class="t mono" style="left:75.6px;top:1611.0px;font-size:23.330px;line-height:30px"><span style="color:#e3e24c">@workspace/web:build:</span><span style="color:#cccccc"> Import trace for requested module:</span></div><div class="t mono" style="left:75.6px;top:1641.0px;font-size:23.330px;line-height:30px"><span style="color:#e3e24c">@workspace/web:build:</span><span style="color:#cccccc"> ../../node_modules/.pnpm/better-sqlite3@12.2.0/node_modules/better-sqlite3/lib/database.js</span></div><div class="t mono" style="left:75.6px;top:1671.0px;font-size:23.330px;line-height:30px"><span style="color:#e3e24c">@workspace/web:build:</span><span style="color:#cccccc"> ../../node_modules/.pnpm/better-sqlite3@12.2.0/node_modules/better-sqlite3/lib/index.js</span></div><div class="t mono" style="left:75.6px;top:1701.0px;font-size:23.330px;line-height:30px"><span style="color:#e3e24c">@workspace/web:build:</span><span style="color:#cccccc"> ../server/dist/index.js</span></div><div class="t mono" style="left:75.6px;top:1731.0px;font-size:23.330px;line-height:30px"><span style="color:#e3e24c">@workspace/web:build:</span><span style="color:#cccccc"> ./src/app/api/[...slug]/route.ts</span></div><div class="a" style="left:42px;top:1400px;width:6px;height:420px;background:#2b2f37;"></div><div class="a" style="left:2422px;top:1400px;width:1px;height:360px;background:#43464d;"></div><div class="a" style="left:2422px;top:1400px;width:28px;height:1px;background:#43464d;"></div><div class="a" style="left:2423px;top:1401px;width:10px;height:9px;background:#3f7fb3;"></div><div class="a" style="left:2423px;top:1431px;width:10px;height:9px;background:#3f7fb3;"></div><div class="a" style="left:2423px;top:1612px;width:27px;height:40px;background:#3b3f4a;"></div><div class="a" style="left:2423px;top:1751px;width:10px;height:9px;background:#606266;"></div><div class="t" style="left:1111px;top:1790.62px;font-size:21.4px;line-height:26.75px;color:#7d8188;">⌘K to generate a command</div><div class="a" style="left:36px;top:1826px;width:68px;height:44px;background:#608bf5;"></div><svg style="left:60px;top:1834px;" width="20" height="26" viewBox="0 0 20 26"><path d="M1.5 9 9.5 17 1.5 25M18.5 2 10.5 10 18.5 18" fill="none" stroke="#eef0f8" stroke-width="1.8"/></svg><div class="t" style="left:151.7px;top:1834.00px;font-size:24px;line-height:30.0px;color:#a3a9b6;">main</div><div class="t" style="left:308px;top:1834.00px;font-size:24px;line-height:30.0px;color:#a3a9b6;">0</div><div class="t" style="left:365px;top:1834.00px;font-size:24px;line-height:30.0px;color:#a3a9b6;">0</div><div class="t" style="left:412px;top:1834.00px;font-size:24px;line-height:30.0px;color:#a3a9b6;">-- NORMAL --</div><div class="t" style="left:1258.6px;top:1833.31px;font-size:25.1px;line-height:31.38px;color:#a3a9b6;">You, 4 hours ago</div><div class="t" style="left:1480.5px;top:1833.31px;font-size:25.1px;line-height:31.38px;color:#a3a9b6;">Cursor Tab</div><div class="t" style="left:1670.6px;top:1833.31px;font-size:25.1px;line-height:31.38px;color:#a3a9b6;">Brendan Dash (4 hours ago)</div><div class="t" style="left:2205.6px;top:1833.31px;font-size:25.1px;line-height:31.38px;color:#a3a9b6;">Spaces: 2</div><div class="t" style="left:2349px;top:1833.31px;font-size:25.1px;line-height:31.38px;color:#a3a9b6;">UTF-8</div><div class="t" style="left:2454px;top:1833.31px;font-size:25.1px;line-height:31.38px;color:#a3a9b6;">LF</div><div class="t" style="left:2551px;top:1833.31px;font-size:25.1px;line-height:31.38px;color:#a3a9b6;">TypeScript</div><div class="t" style="left:2735px;top:1833.31px;font-size:25.1px;line-height:31.38px;color:#a3a9b6;">Go Live</div><div class="t" style="left:2886px;top:1833.31px;font-size:25.1px;line-height:31.38px;color:#a3a9b6;">Prettier</div><div class="t" style="left:2512px;top:1833.62px;font-size:23px;line-height:28.75px;color:#a3a9b6;">{ }</div><div class="t" style="left:2020px;top:1832.75px;font-size:26px;line-height:32.5px;color:#a3a9b6;">Ln 11, Col 35</div><div class="a" style="left:969px;top:497px;width:1161px;height:793px;background:#222429;border-radius:14px;box-shadow:0 0 18px 5px rgba(0,0,0,0.5)"></div><div class="t" style="left:997px;top:512.00px;font-size:27.2px;line-height:34.0px;color:#6c7078;">Search files, content, and symbols (append : to go to line or @ to go to symbol)</div><div class="a" style="left:995px;top:514px;width:2px;height:30px;background:#d4d4d4;"></div><div class="a" style="left:980px;top:563px;width:1140px;height:44px;background:#2c313a;border-radius:8px"></div><div class="a" style="left:969px;top:560px;width:1161px;height:723px;overflow:hidden"><svg style="left:28.600000000000023px;top:11.0px" width="24" height="28"><use href="#i-route"/></svg><div class="t" style="left:69.40000000000009px;top:9.5px;font-size:27px;line-height:34px;color:#d7dae0">route.ts</div><div class="t" style="left:171.4312500000001px;top:11.5px;font-size:25px;line-height:32px;color:#8b9099">apps/web/src/app/api/[...slug]</div><svg style="left:27.600000000000023px;top:62.0px" width="26" height="26"><use href="#i-react"/></svg><div class="t" style="left:69.40000000000009px;top:59.5px;font-size:27px;line-height:34px;color:#d7dae0">app - layout.tsx</div><div class="t" style="left:264.4781250000001px;top:61.5px;font-size:25px;line-height:32px;color:#8b9099">apps/web/src/app/layout.tsx</div><svg style="left:28.600000000000023px;top:113.0px" width="24" height="24"><use href="#i-ts"/></svg><div class="t" style="left:69.40000000000009px;top:109.5px;font-size:27px;line-height:34px;color:#d7dae0">manifest.ts</div><div class="t" style="left:211.9312500000001px;top:111.5px;font-size:25px;line-height:32px;color:#8b9099">apps/web/src/app</div><svg style="left:28.600000000000023px;top:163.0px" width="24" height="24"><use href="#i-ts"/></svg><div class="t" style="left:69.40000000000009px;top:159.5px;font-size:27px;line-height:34px;color:#d7dae0">sw.ts</div><div class="t" style="left:141.4156250000001px;top:161.5px;font-size:25px;line-height:32px;color:#8b9099">apps/web/src/app</div><svg style="left:27.600000000000023px;top:212.0px" width="26" height="26"><use href="#i-react"/></svg><div class="t" style="left:69.40000000000009px;top:209.5px;font-size:27px;line-height:34px;color:#d7dae0">lang-switcher.tsx</div><div class="t" style="left:280.9625000000001px;top:211.5px;font-size:25px;line-height:32px;color:#8b9099">apps/web/src/components</div><svg style="left:27.600000000000023px;top:262.0px" width="26" height="26"><use href="#i-next"/></svg><div class="t" style="left:69.40000000000009px;top:259.5px;font-size:27px;line-height:34px;color:#d7dae0">next.config.ts</div><div class="t" style="left:240.4781250000001px;top:261.5px;font-size:25px;line-height:32px;color:#8b9099">apps/web</div><svg style="left:27.600000000000023px;top:312.0px" width="26" height="26"><use href="#i-node"/></svg><div class="t" style="left:69.40000000000009px;top:309.5px;font-size:27px;line-height:34px;color:#d7dae0">package.json</div><svg style="left:27.600000000000023px;top:362.0px" width="26" height="26"><use href="#i-turbo"/></svg><div class="t" style="left:69.40000000000009px;top:359.5px;font-size:27px;line-height:34px;color:#d7dae0">turbo.json</div><svg style="left:27.600000000000023px;top:412.0px" width="26" height="26"><use href="#i-turbo"/></svg><div class="t" style="left:69.40000000000009px;top:409.5px;font-size:27px;line-height:34px;color:#d7dae0">turbo.json</div><div class="t" style="left:199.9625000000001px;top:411.5px;font-size:25px;line-height:32px;color:#8b9099">apps/web</div><svg style="left:27.600000000000023px;top:462.0px" width="26" height="26"><use href="#i-node"/></svg><div class="t" style="left:69.40000000000009px;top:459.5px;font-size:27px;line-height:34px;color:#d7dae0">package.json</div><div class="t" style="left:240.5093750000001px;top:461.5px;font-size:25px;line-height:32px;color:#8b9099">packages/env</div><svg style="left:27.600000000000023px;top:512.0px" width="26" height="26"><use href="#i-node"/></svg><div class="t" style="left:69.40000000000009px;top:509.5px;font-size:27px;line-height:34px;color:#d7dae0">package.json</div><div class="t" style="left:240.5093750000001px;top:511.5px;font-size:25px;line-height:32px;color:#8b9099">apps/server</div><svg style="left:27.600000000000023px;top:562.0px" width="26" height="26"><use href="#i-drizzle"/></svg><div class="t" style="left:69.40000000000009px;top:559.5px;font-size:27px;line-height:34px;color:#d7dae0">drizzle.config.ts</div><div class="t" style="left:267.4625000000001px;top:561.5px;font-size:25px;line-height:32px;color:#8b9099">apps/server</div><svg style="left:28.600000000000023px;top:613.0px" width="24" height="24"><use href="#i-ts"/></svg><div class="t" style="left:69.40000000000009px;top:609.5px;font-size:27px;line-height:34px;color:#d7dae0">index.ts</div><div class="t" style="left:174.4468750000001px;top:611.5px;font-size:25px;line-height:32px;color:#8b9099">packages/env/src</div><svg style="left:27.600000000000023px;top:662.0px" width="26" height="26"><use href="#i-env"/></svg><div class="t" style="left:69.40000000000009px;top:659.5px;font-size:27px;line-height:34px;color:#d7dae0">.env</div><svg style="left:27.600000000000023px;top:712.0px" width="26" height="26"><use href="#i-node"/></svg><div class="t" style="left:69.40000000000009px;top:709.5px;font-size:27px;line-height:34px;color:#d7dae0">package.json</div><div class="t" style="left:240.5093750000001px;top:711.5px;font-size:25px;line-height:32px;color:#8b9099">apps/web</div></div><div class="t" style="left:1833px;top:568.75px;font-size:26px;line-height:32.5px;color:#d7dae0;">recently opened</div><svg style="left:2028px;top:574px;color:#cccccc" width="22" height="22"><use href="#i-split"/></svg><svg style="left:2072px;top:576px;color:#cccccc" width="18" height="18"><use href="#i-close"/></svg><svg style="left:2062px;top:57px;" width="28" height="28" viewBox="0 0 28 28"><rect x="0" y="0" width="8" height="8" fill="#f4b63f"/><rect x="10" y="0" width="8" height="8" fill="#f4b63f"/><rect x="20" y="0" width="8" height="8" fill="#f4b63f"/><rect x="10" y="10" width="8" height="8" fill="#e2e2e2"/><rect x="20" y="10" width="8" height="8" fill="#f4b63f"/><rect x="0" y="20" width="8" height="8" fill="#e2e2e2"/><rect x="10" y="20" width="8" height="8" fill="#e2e2e2"/><rect x="20" y="20" width="8" height="8" fill="#e2e2e2"/></svg><div class="t" style="left:2103px;top:55.12px;font-size:27px;line-height:33.75px;color:#8b8f97;">p</div><div class="a" style="left:2114px;top:50px;width:12px;height:40px;background:#21252b;"></div><svg style="left:2124px;top:55px;" width="40" height="36" viewBox="0 0 40 36"><circle cx="24" cy="15" r="9" fill="none" stroke="#c5c5c5" stroke-width="2"/><path d="M15 15H3M8 10l-5 5 5 5" fill="none" stroke="#c5c5c5" stroke-width="2"/><circle cx="14.5" cy="29" r="2" fill="#c5c5c5"/><circle cx="22.5" cy="29" r="2" fill="#c5c5c5"/><circle cx="30.5" cy="29" r="2" fill="#c5c5c5"/></svg><svg style="left:2179px;top:55px;" width="36" height="32" viewBox="0 0 36 32"><circle cx="18" cy="15" r="8.5" fill="none" stroke="#8d9096" stroke-width="2"/><path d="M1 15h8M27 15h8" stroke="#8d9096" stroke-width="2"/></svg><svg style="left:2230px;top:55px;" width="36" height="32" viewBox="0 0 36 32"><circle cx="14" cy="15" r="8.5" fill="none" stroke="#8d9096" stroke-width="2"/><path d="M1 15h4M22.5 15h11M29 10l5 5-5 5" fill="none" stroke="#8d9096" stroke-width="2"/></svg><svg style="left:2284px;top:55px;" width="32" height="32" viewBox="0 0 32 32"><circle cx="16" cy="16" r="15" fill="none" stroke="#d0d0d0" stroke-width="2"/><path d="M13 8v16M13 11l7 7" stroke="#d0d0d0" stroke-width="2"/><circle cx="13" cy="8.5" r="2.8" fill="#d0d0d0"/><circle cx="13" cy="23.5" r="2.8" fill="#d0d0d0"/><circle cx="20.5" cy="18" r="2.8" fill="#d0d0d0"/></svg><svg style="left:2340px;top:57px;" width="27" height="27" viewBox="0 0 27 27"><rect x="1" y="1" width="25" height="25" rx="3" fill="none" stroke="#d0d0d0" stroke-width="2"/><path d="M1 14h25" stroke="#d0d0d0" stroke-width="2"/></svg><svg style="left:2393px;top:66px;" width="24" height="8" viewBox="0 0 24 8"><circle cx="3" cy="4" r="2.6" fill="#d0d0d0"/><circle cx="12" cy="4" r="2.6" fill="#d0d0d0"/><circle cx="21" cy="4" r="2.6" fill="#d0d0d0"/></svg><svg style="left:1965px;top:64px;" width="17" height="17" viewBox="0 0 18 18"><circle cx="9" cy="9" r="7.5" fill="none" stroke="#7a7e85" stroke-width="2"/><path d="M4 14 14 4" stroke="#7a7e85" stroke-width="2"/></svg><div class="a" style="left:2599px;top:45px;width:52px;height:52px;background:#2c313a;border-radius:7px"></div><svg style="left:2600px;top:50px;" width="50" height="45" viewBox="2600 50 50 45"><g fill="none" stroke="#ececec" stroke-width="2" stroke-linejoin="round"><path d="M2619.5 64 H2613 a1.5 1.5 0 0 0 -1.5 1.5 V84 a1.5 1.5 0 0 0 1.5 1.5 H2628 a1.5 1.5 0 0 0 1.5-1.5 V78.5"/><path d="M2619.5 58 a1.5 1.5 0 0 1 1.5-1.5 H2631.5 L2637.5 62.5 V77 a1.5 1.5 0 0 1 -1.5 1.5 H2621 a1.5 1.5 0 0 1 -1.5-1.5z"/><path d="M2631.5 56.5 V62.5 H2637.5"/></g></svg><svg style="left:2665px;top:50px;" width="45" height="45" viewBox="2665 50 45 45"><g fill="none" stroke="#a2a4a8" stroke-width="1.9"><circle cx="2693" cy="66" r="9.3"/><path d="M2686.2 73.5 2675.5 85"/></g></svg><svg style="left:2735px;top:50px;" width="35" height="40" viewBox="2735 50 35 40"><g fill="none" stroke="#a2a4a8" stroke-width="1.9"><circle cx="2746.3" cy="60.2" r="4.2"/><circle cx="2759.4" cy="66" r="4.2"/><circle cx="2746.3" cy="81.7" r="4.2"/><path d="M2746.3 64.4 V77.5 M2759.4 70.2 c0 3 -2 4.2 -5 4.2 H2751 c-3 0 -4.7 1.3 -4.7 3"/></g></svg><svg style="left:2800px;top:50px;" width="40" height="40" viewBox="2800 50 40 40"><g fill="none" stroke="#a2a4a8" stroke-width="1.9"><path d="M2805.6 60.2 H2817.4 V83.6 H2805.6z M2805.6 72 H2829 V83.6 H2817.4"/><path d="M2823.9 57.8 L2830.9 64.8 2823.9 71.8 2816.9 64.8z"/></g></svg><svg style="left:2865px;top:60px;" width="30" height="22" viewBox="2865 60 30 22"><path d="M2872 67.4 2881 76.4 2890 67.4" fill="none" stroke="#a2a4a8" stroke-width="1.9"/></svg><svg style="left:2241px;top:1352px;" width="24" height="28" viewBox="0 0 24 28"><path d="M1 5h22M8 5V2h8v3M4 5l1.5 22h13L20 5M9 9v14M12 9v14M15 9v14" fill="none" stroke="#cccccc" stroke-width="2"/></svg><svg style="left:2290px;top:1362px;" width="24" height="8" viewBox="0 0 24 8"><circle cx="3" cy="4" r="2.4" fill="#cccccc"/><circle cx="12" cy="4" r="2.4" fill="#cccccc"/><circle cx="21" cy="4" r="2.4" fill="#cccccc"/></svg><svg style="left:2341px;top:1358px;" width="22" height="14" viewBox="0 0 22 14"><path d="M1.5 12.5 11 3 20.5 12.5" fill="none" stroke="#cccccc" stroke-width="2"/></svg><svg style="left:2395px;top:1358px;" width="18" height="18" viewBox="0 0 18 18"><path d="M1 1 17 17M17 1 1 17" fill="none" stroke="#cccccc" stroke-width="2"/></svg><svg style="left:118px;top:1836px;" width="22" height="26" viewBox="0 0 22 26"><circle cx="5" cy="4.5" r="3.3" fill="none" stroke="#a3a9b6" stroke-width="1.8"/><circle cx="5" cy="21.5" r="3.3" fill="none" stroke="#a3a9b6" stroke-width="1.8"/><circle cx="17" cy="9.5" r="3.3" fill="none" stroke="#a3a9b6" stroke-width="1.8"/><path d="M5 8v10M17 13c0 4-12 3-12 5" fill="none" stroke="#a3a9b6" stroke-width="1.8"/></svg><svg style="left:216px;top:1836px;" width="28" height="26" viewBox="0 0 28 26"><path d="M4 12A10 10 0 0 1 22 7M24 14A10 10 0 0 1 6 19" fill="none" stroke="#a3a9b6" stroke-width="2"/><path d="M23 2v6h-6M5 24v-6h6" fill="none" stroke="#a3a9b6" stroke-width="2"/></svg><svg style="left:273px;top:1836px;" width="26" height="26" viewBox="0 0 26 26"><circle cx="13" cy="13" r="11" fill="none" stroke="#a3a9b6" stroke-width="1.8"/><path d="M8.5 8.5l9 9M17.5 8.5l-9 9" stroke="#a3a9b6" stroke-width="1.8"/></svg><svg style="left:330px;top:1836px;" width="28" height="26" viewBox="0 0 28 26"><path d="M14 2 26.5 24H1.5z" fill="none" stroke="#a3a9b6" stroke-width="1.8" stroke-linejoin="round"/><path d="M14 9v8M14 19.5v2.5" stroke="#a3a9b6" stroke-width="2"/></svg><svg style="left:1229px;top:1833px;" width="16" height="32" viewBox="0 0 16 32"><circle cx="8" cy="16" r="6" fill="none" stroke="#a3a9b6" stroke-width="2"/><path d="M8 0v10M8 22v10" stroke="#a3a9b6" stroke-width="2"/></svg><svg style="left:1642px;top:1833px;" width="16" height="32" viewBox="0 0 16 32"><circle cx="8" cy="16" r="6" fill="none" stroke="#a3a9b6" stroke-width="2"/><path d="M8 0v10M8 22v10" stroke="#a3a9b6" stroke-width="2"/></svg><svg style="left:2702px;top:1834px;" width="24" height="32" viewBox="0 0 24 32"><circle cx="12" cy="12" r="3" fill="#a3a9b6"/><path d="M6 18A8.5 8.5 0 1 1 18 18M3 21A12.5 12.5 0 1 1 21 21" fill="none" stroke="#a3a9b6" stroke-width="2"/><path d="M12 15v14" stroke="#a3a9b6" stroke-width="3.5"/></svg><svg style="left:2850px;top:1838px;" width="28" height="20" viewBox="0 0 28 20"><path d="M1 11l6 6L22 2M10 14l3 3L27 2" fill="none" stroke="#a3a9b6" stroke-width="1.8"/></svg><svg style="left:3004px;top:1834px;" width="24" height="30" viewBox="0 0 24 30"><path d="M3 22V13a9 9 0 0 1 18 0v9l2 2H1z" fill="none" stroke="#a3a9b6" stroke-width="2" stroke-linejoin="round"/><path d="M9 26a3 3 0 0 0 6 0" fill="none" stroke="#a3a9b6" stroke-width="2"/></svg></body></html>
